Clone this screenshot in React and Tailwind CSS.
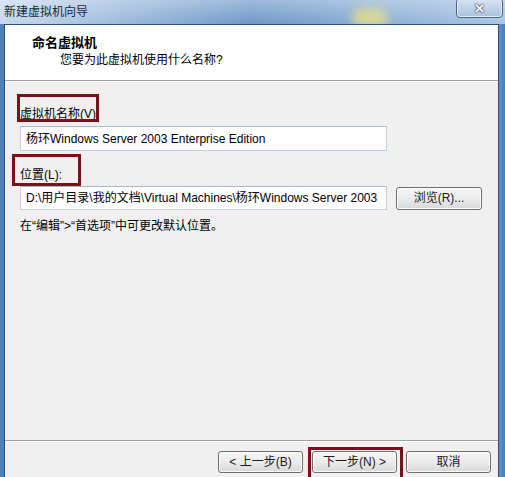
import React from "react";

const F = "font-['Segoe_UI','Liberation_Sans','Noto_Sans_CJK_SC',sans-serif]";

function Btn({ children, className = "" }) {
  return (
    <div
      className={`relative w-[85px] h-[22px] rounded-[3px] border border-[#707070] bg-gradient-to-b from-[#f6f6f6] via-[#ebebeb] to-[#d8d8d8] flex items-center justify-center text-[12px] text-[#1a1a1a] shadow-[inset_0_0_0_1px_#fcfcfc] ${className}`}
    >
      {children}
    </div>
  );
}

export default function App() {
  return (
    <div className={`w-[505px] h-[477px] overflow-hidden flex flex-col bg-[#5d8cc2] ${F}`}>
      {/* Title bar */}
      <div className="relative h-[24px] shrink-0 bg-gradient-to-r from-[#c6d8ec] via-[#6e98c8] to-[#a9c4e2] overflow-hidden">
        <div className="absolute inset-0 bg-gradient-to-b from-[#ffffff55] to-transparent" />
        <div className="absolute left-[352px] top-[8px] w-[36px] h-[20px] rounded-full bg-[#e8e08a] blur-[5px] opacity-80" />
        <div className="relative pl-[4px] pt-[4px] text-[12px] leading-[16px] text-[#1b2733]">新建虚拟机向导</div>
        <div className="absolute left-[456px] top-[-2px] w-[47px] h-[20px] rounded-[4px] border border-[#46668f] bg-gradient-to-b from-[#d7e4f2] to-[#a9c2de] shadow-[inset_0_0_0_1px_#ffffffaa] flex items-center justify-center">
          <span className="text-[13px] font-bold leading-none text-white [text-shadow:0_0_2px_#223,0_0_1px_#223]">✕</span>
        </div>
      </div>

      {/* Window body with frame */}
      <div className="flex-1 flex">
        <div className="w-[4px] bg-[#4e80ba]" />
        <div className="flex-1 flex flex-col bg-[#f0f0f0] border-l border-t border-r border-[#2f4f78] mr-[3px]">
          {/* Header */}
          <div className="h-[56px] bg-white border-b border-[#a0a0a0] pt-[10px] pl-[27px]">
            <div className="text-[13px] font-bold leading-[16px] text-black">命名虚拟机</div>
            <div className="pl-[28px] mt-[1px] text-[12px] leading-[16px] text-black">您要为此虚拟机使用什么名称?</div>
          </div>
          <div className="h-px bg-white" />

          {/* Content */}
          <div className="pl-[15px] flex flex-col text-[12px] text-black">
            <div className="relative mt-[24px] leading-[16px] self-start">
              虚拟机名称(V):
              <div className="absolute left-[-3px] top-[-12px] w-[82px] h-[28px] border-[3px] border-[#7b1018]" />
            </div>
            <div className="mt-[4px] w-[367px] h-[25px] bg-white border border-[#c4cfdc] border-t-[#abb8c8] flex items-center pl-[5px] leading-none">
              杨环Windows Server 2003 Enterprise Edition
            </div>

            <div className="relative mt-[16px] leading-[16px] self-start">
              位置(L):
              <div className="absolute left-[-8px] top-[-13px] w-[69px] h-[32px] border-[3px] border-[#7b1018]" />
            </div>
            <div className="mt-[3px] flex items-center">
              <div className="w-[367px] h-[24px] bg-white border border-[#c4cfdc] border-t-[#abb8c8] flex items-center pl-[5px] leading-none overflow-hidden whitespace-nowrap">
                D:\用户目录\我的文档\Virtual Machines\杨环Windows Server 2003
              </div>
              <Btn className="ml-[9px] w-[86px] h-[23px]">浏览(R)...</Btn>
            </div>
            <div className="mt-[8px] leading-[16px]">在“编辑”&gt;“首选项”中可更改默认位置。</div>
          </div>

          {/* Footer */}
          <div className="mt-auto h-[37px] border-t border-[#a0a0a0]">
            <div className="h-px bg-white" />
            <div className="flex pl-[213px] pt-[9px] gap-[9px]">
              <Btn>&lt; 上一步(B)</Btn>
              <div className="relative">
                <Btn>下一步(N) &gt;</Btn>
                <div className="absolute left-[-4px] top-[-4px] w-[95px] h-[34px] border-[3px] border-[#7b1018]" />
              </div>
              <Btn>取消</Btn>
            </div>
          </div>
        </div>
        <div className="w-[3px] bg-[#4e80ba]" />
      </div>
    </div>
  );
}
